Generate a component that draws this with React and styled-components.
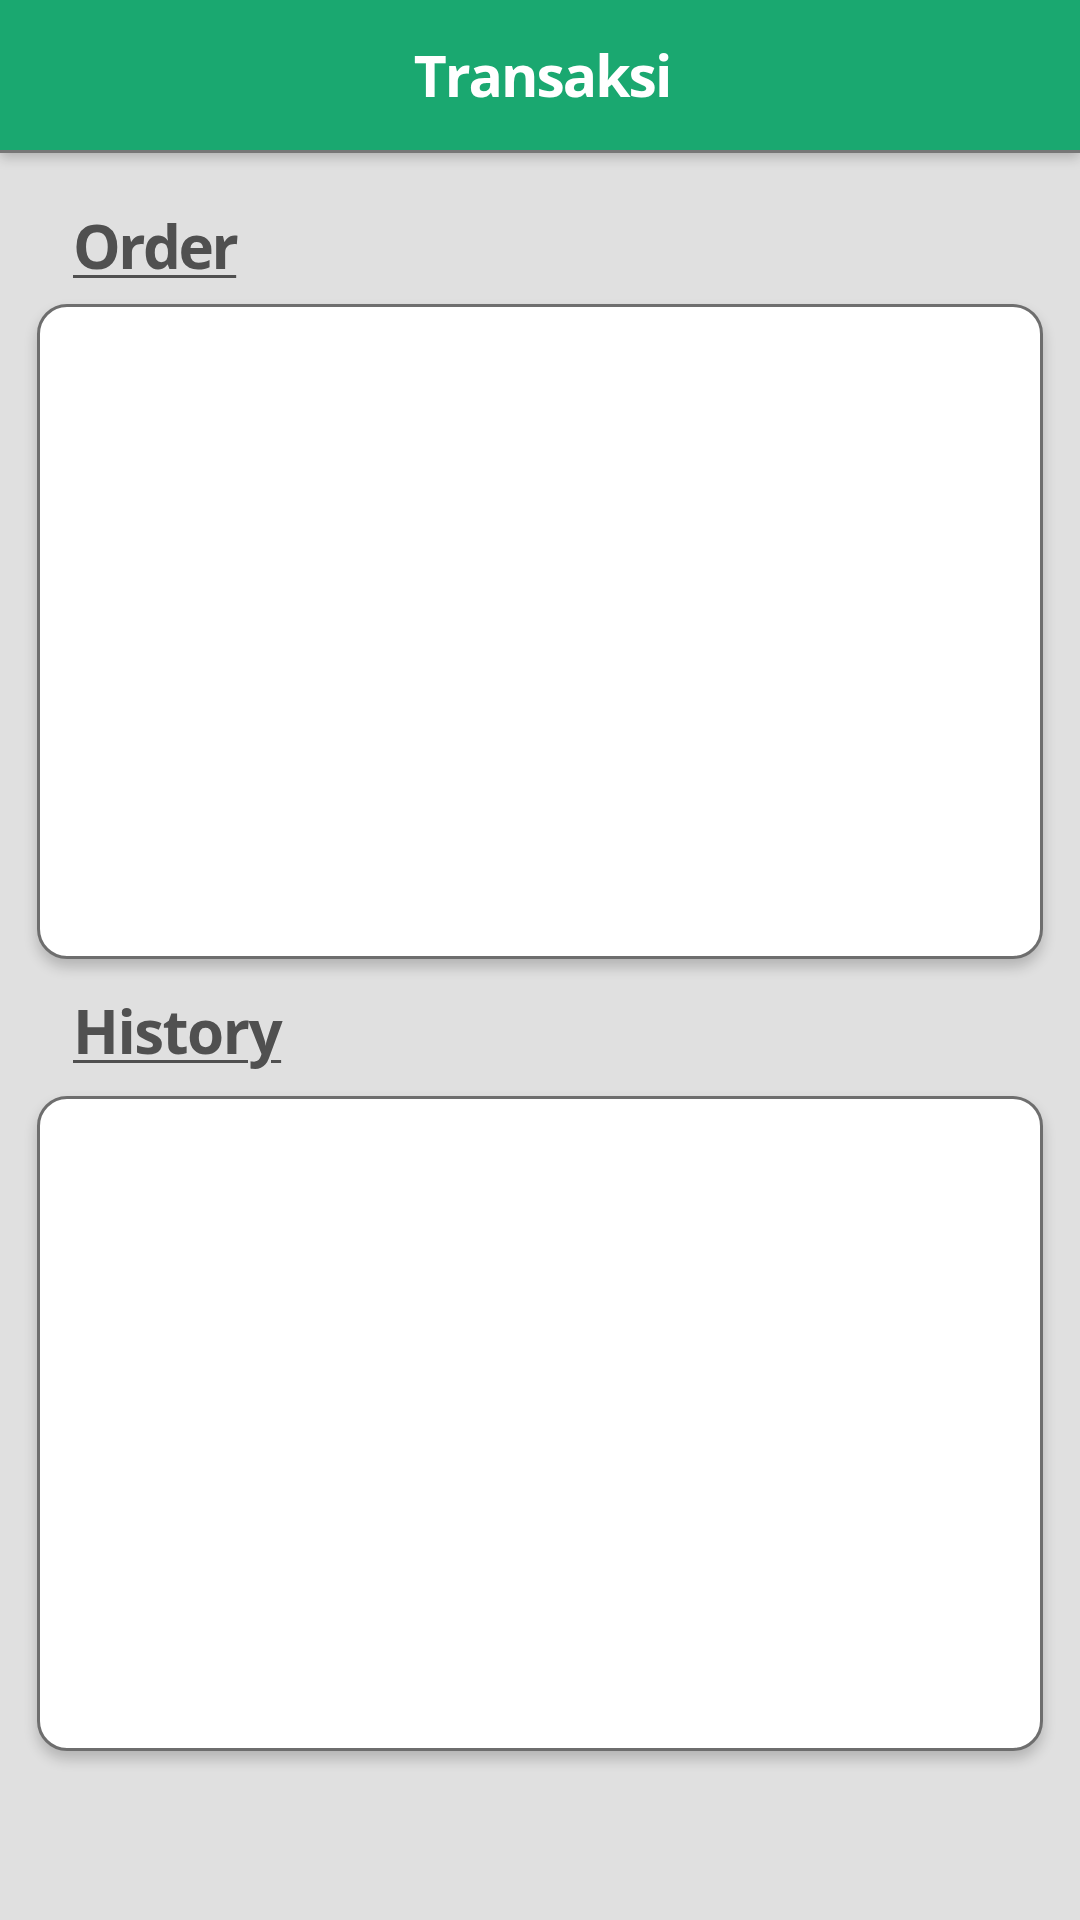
import React from "react";
import styled, { createGlobalStyle } from "styled-components";

const GlobalStyle = createGlobalStyle`
	* {
		box-sizing: border-box;
	}

	body {
		margin: 0;
		background-color: #e0e0e0;
		font-family: "Open Sans", "Noto Sans", sans-serif;
	}
`;

const App = () => {
	return (
		<>
			<GlobalStyle />
			<Page>
				<Header>
					<Title>Transaksi</Title>
				</Header>
				<Main>
					<Section>
						<Label $gap={28} $spacing={-2.5}>
							Order
						</Label>
						<Card />
					</Section>
					<Section>
						<Label $gap={35} $spacing={-1.5}>
							History
						</Label>
						<Card />
					</Section>
				</Main>
			</Page>
		</>
	);
};

export default App;

const Page = styled.div`
	min-height: 1920px;
	background-color: #e0e0e0;
`;

const Header = styled.header`
	height: 153px;
	display: flex;
	align-items: center;
	justify-content: center;
	background-color: #1aa870;
	border-bottom: 3px solid #777777;
	box-shadow: 0 4px 12px rgba(0, 0, 0, 0.22);
	position: relative;
	z-index: 2;
`;

const Title = styled.h1`
	margin: 0 0 0 4px;
	color: #ffffff;
	font-size: 57px;
	line-height: 1;
	font-weight: 700;
	letter-spacing: -2px;
`;

const Main = styled.main`
	display: flex;
	flex-direction: column;
	gap: 42px;
	padding: 63px 37px 0;
`;

const Section = styled.section`
	display: flex;
	flex-direction: column;
`;

const Label = styled.h2`
	margin: 0 0 ${(p) => p.$gap}px 36px;
	color: #505050;
	font-size: 60px;
	line-height: 1;
	font-weight: 700;
	letter-spacing: ${(p) => p.$spacing}px;
	text-decoration: underline;
	text-decoration-thickness: 3px;
	text-underline-offset: 6px;
`;

const Card = styled.div`
	height: 655px;
	background-color: #ffffff;
	border: 3px solid #6e6e6e;
	border-radius: 30px;
	box-shadow: 0 8px 14px rgba(0, 0, 0, 0.2);
`;
